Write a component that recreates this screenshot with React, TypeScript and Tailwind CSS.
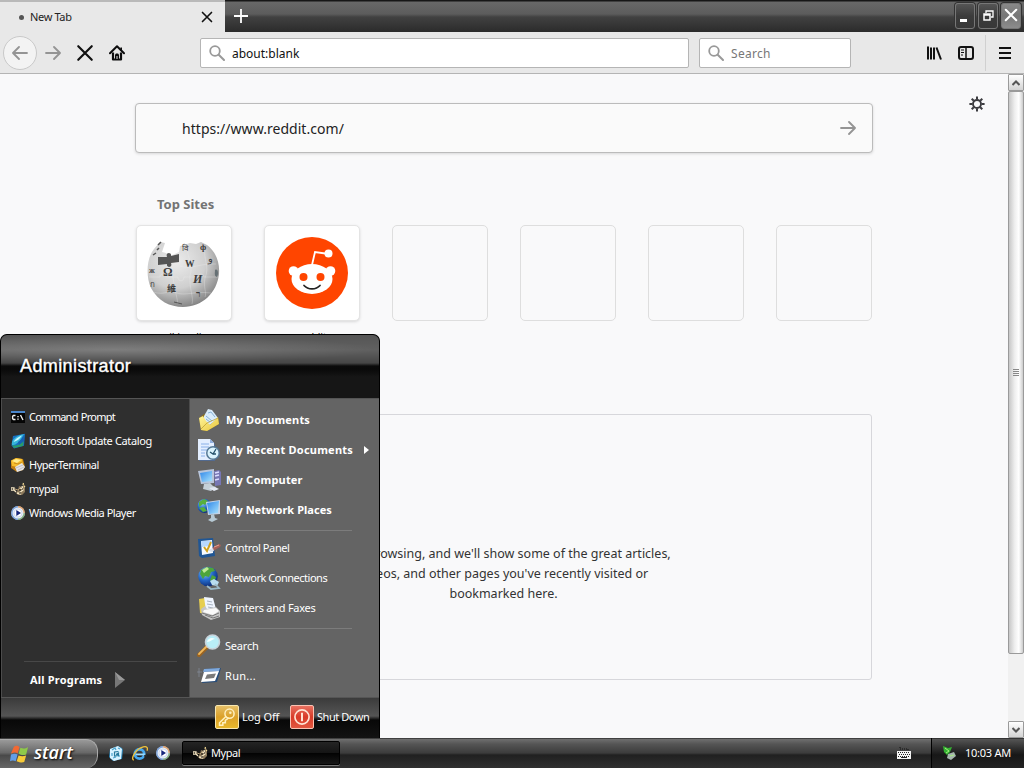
import type { ReactNode } from "react";

type IconProps = { children: ReactNode; box?: string; className?: string };

function Svg({ children, box = "0 0 24 24", className = "size-6" }: IconProps) {
  return (
    <svg viewBox={box} className={`block shrink-0 ${className}`} fill="none">
      {children}
    </svg>
  );
}

function Gradients() {
  return (
    <svg className="absolute size-0" aria-hidden="true">
      <defs>
        <radialGradient id="globe" cx=".4" cy=".3" r=".75">
          <stop offset="0" stopColor="#ececec" />
          <stop offset=".55" stopColor="#cfcfcf" />
          <stop offset="1" stopColor="#7c7c7c" />
        </radialGradient>
        <radialGradient id="earth" cx=".35" cy=".3" r=".8">
          <stop offset="0" stopColor="#8fd0f5" />
          <stop offset=".5" stopColor="#2468c8" />
          <stop offset="1" stopColor="#0a2268" />
        </radialGradient>
        <linearGradient id="screen" x1="0" y1="0" x2="1" y2="1">
          <stop offset="0" stopColor="#2f86e8" />
          <stop offset="1" stopColor="#a8e4ff" />
        </linearGradient>
        <linearGradient id="folder" x1="0" y1="0" x2="1" y2="1">
          <stop offset="0" stopColor="#fff59a" />
          <stop offset="1" stopColor="#e9c63c" />
        </linearGradient>
      </defs>
    </svg>
  );
}

/* ---------- Browser icons ---------- */

const Magnifier = () => (
  <Svg box="0 0 16 16" className="size-4">
    <circle cx="6" cy="6" r="4.8" stroke="#999" strokeWidth="1.8" />
    <path d="M9.7 9.7 15 15" stroke="#999" strokeWidth="2" strokeLinecap="round" />
  </Svg>
);

const Arrow = ({ left = false, className = "size-4" }: { left?: boolean; className?: string }) => (
  <Svg box="0 0 16 16" className={`${className} ${left ? "-scale-x-100" : ""}`}>
    <path d="M1 8h13.5M9 2l6 6-6 6" stroke="#949494" strokeWidth="1.8" strokeLinecap="round" strokeLinejoin="round" />
  </Svg>
);

const Cross = ({ className, stroke = "#111", width = 2 }: { className: string; stroke?: string; width?: number }) => (
  <Svg box="0 0 16 16" className={className}>
    <path d="m2 2 12 12M14 2 2 14" stroke={stroke} strokeWidth={width} strokeLinecap="round" />
  </Svg>
);

const Home = () => (
  <Svg box="0 0 16 16" className="size-4">
    <path d="M1 8.2 8 1.3l7 6.9" stroke="#0c0c0d" strokeWidth="2" strokeLinecap="round" strokeLinejoin="round" />
    <path d="M4 7.5v7h8v-7" stroke="#0c0c0d" strokeWidth="2.2" strokeLinejoin="round" />
    <path d="M6 15V9.5l1-1h2l1 1V15z" fill="#0c0c0d" />
    <path d="M8 11v3" stroke="#e5e5e5" strokeWidth="1" />
    <path d="M12.2 2.500v3" stroke="#0c0c0d" strokeWidth="1.600" />
  </Svg>
);

const Gear = () => (
  <Svg box="0 0 16 16" className="size-4">
    <circle cx="8" cy="8" r="4" stroke="#3c3c40" strokeWidth="1.9" />
    <path
      d="M8 .4v3M8 12.6v3M.4 8h3M12.6 8h3M2.7 2.7l2.1 2.1M11.2 11.2l2.1 2.1M13.3 2.7l-2.1 2.1M4.8 11.2l-2.1 2.1"
      stroke="#3c3c40"
      strokeWidth="2"
    />
  </Svg>
);

/* ---------- Top site icons ---------- */

const Wikipedia = () => (
  <Svg box="0 0 76 76" className="size-[76px]">
    <path
      d="M14 7 8 14C0 24 0 42 5 53c7 13 19 19 32 19 19 0 34-14 36-33 1-13-4-23-12-29l-6-3-5 2-6-1-6 2-4 1-1 6-9 4-4-3-4-1 3-9z"
      fill="url(#globe)"
    />
    <path d="M12 22h9c-2-5 5-5 4-1l8-2v8l-8 1c2 5-5 5-4 1l-9 1z" fill="#555" />
    <g stroke="#f2f2f2" strokeOpacity=".4" strokeWidth=".7">
      <path d="M3 42h11c0-4 6-4 6 0h12c0 5 6 5 6 0h14c0-4 6-4 6 0h15M7 57c12 4 16-3 24 1 8 3 18-2 34 0M34 31c11 4 20-3 36-2" />
      <path d="M27 30c-2 10 2 22 5 39M42 9c-3 11 6 19 2 32-1 12 4 22 2 28M59 13c-2 12 5 18 0 30-2 9 2 15 0 19" />
    </g>
    <g fill="#3d3d3d" className="font-['Liberation_Serif',serif]">
      <text x="17" y="41" fontSize="12" fontWeight="700">Ω</text>
      <text x="39" y="32" fontSize="9.5" fontWeight="700">W</text>
      <text x="47" y="48" fontSize="12" fontWeight="700" fontStyle="italic">И</text>
      <text x="21" y="57" fontSize="9" fontWeight="700" className="font-['Noto_Sans_CJK_SC',sans-serif]">維</text>
      <text x="50" y="62" fontSize="9" fontWeight="700">ר</text>
      <text x="36" y="16" fontSize="8">वि</text>
      <text x="54" y="15" fontSize="9" fontWeight="700">ф</text>
      <text x="62" y="27" fontSize="10">و</text>
      <text x="3" y="38" fontSize="8" fontWeight="700">ж</text>
      <text x="4" y="52" fontSize="8">ก</text>
    </g>
    <path d="m12 10 3-3M7 20l3-2M11 15l2-2" stroke="#555" strokeWidth="1.5" />
    <path d="M69 35c3-2 4 4 2 7-3-1-2-4-2-7z" fill="#667074" />
    <path d="m28 67 8 2" stroke="#555" />
  </Svg>
);

const Reddit = () => (
  <Svg box="0 0 72 72" className="size-[72px]">
    <circle cx="36" cy="36" r="36" fill="#ff4500" />
    <path d="m36 28 3-13 14 2" stroke="#fff" strokeWidth="1.8" />
    <circle cx="52.5" cy="16.5" r="4" fill="#fff" />
    <circle cx="17.5" cy="34" r="4.8" fill="#fff" />
    <circle cx="54.5" cy="34" r="4.8" fill="#fff" />
    <ellipse cx="36" cy="42" rx="20.5" ry="15" fill="#fff" />
    <circle cx="27.5" cy="40" r="4" fill="#ff4500" />
    <circle cx="44.5" cy="40" r="4" fill="#ff4500" />
    <path d="M28 48.5c4 4.5 12 4.5 16 0" stroke="#222" strokeWidth="1.7" strokeLinecap="round" />
  </Svg>
);

/* ---------- Start menu icons ---------- */

const PromptIcon = () => (
  <Svg box="0 0 16 16" className="size-4">
    <path d="M1 2h14v12H1z" fill="#050505" />
    <path d="M1 2h14v2H1z" fill="#4a86cc" />
    <path d="M5.5 6.5h-2l-.9.9v2.2l.9.9h2M8 7v1.2M8 9.5v1.2M10.5 6l2.5 5" stroke="#eee" strokeWidth="1.4" />
  </Svg>
);

const CatalogIcon = () => (
  <Svg box="0 0 16 16" className="size-4">
    <path d="M3 3 15 .8l-1 12L4 15.500l-2.500-3z" fill="#1670c0" />
    <path d="M2 12C1 7 5 3 14.5 1 12 3 12 7 6 11c-1 .8-2 1-4 1z" fill="#35b6dc" />
    <path d="M3.5 9C5 6 8 4 12 2.5 10 6 7 8 3.5 9z" fill="#c5f6ff" />
    <path d="M2 12c4 1.5 7 0 11.5-4L13 13l-9 2z" fill="#2b9c68" />
    <path d="M8 9c2-1 4-3 5.5-6L14 8l-5 4z" fill="#1660b4" />
  </Svg>
);

const HyperIcon = () => (
  <Svg box="0 0 16 16" className="size-4">
    <path d="m1 4 5-3 7 1 2 8-2 3-6 2-6-4z" fill="#be7d13" />
    <path d="m1 3.5 5-2.5 6 1 1 5-5 3-6-1z" fill="#f7be2d" />
    <path d="m2 4 4-2 5 1-4 3z" fill="#ffed91" />
    <path d="m5 10 7-4 3 4-2 3-6 2z" fill="#e4e4e7" />
    <path d="m6 11 7-3M8 13l6-3" stroke="#b6b6c0" strokeWidth=".8" />
    <path d="m4 6 4 1 4-2" stroke="#c98c1d" />
  </Svg>
);

const MypalIcon = () => (
  <Svg box="0 0 16 16" className="size-4">
    <path d="m9 5 3 1 2-3 1 3v5l-3 3H8l-2-2 2-3z" fill="#8b785a" />
    <path d="M1 7h3v2H1M4 9l2 2M10 7l3 1M12 5l1 4-4 3M7 12l4 1" stroke="#f4e5c3" strokeWidth="1.3" />
    <path d="m13 4 .5-2M14 6l1-1" stroke="#f1d894" strokeWidth="1.2" />
    <path d="M2 8h1M9 9h2M12 8h1M9 12h2" stroke="#161310" strokeWidth="1.2" />
    <path d="m5 8 3 1 2-2" stroke="#b59b72" />
  </Svg>
);

const MediaIcon = () => (
  <Svg box="0 0 16 16" className="size-4">
    <circle cx="8" cy="8" r="6.8" fill="#e5edf8" />
    <path d="M8 1.8A6.2 6.2 0 0 1 14.2 8" stroke="#dfa36f" strokeWidth="1.4" />
    <path d="M14.2 8A6.2 6.2 0 0 1 8 14.2" stroke="#83ae83" strokeWidth="1.4" />
    <path d="M8 14.2A6.2 6.2 0 0 1 8 1.8" stroke="#7ca3dc" strokeWidth="1.4" />
    <circle cx="8" cy="8" r="4" fill="#fff" stroke="#c4d2ed" strokeWidth=".8" />
    <path d="m6.3 5 4.700 3-4.700 3z" fill="#17277c" />
  </Svg>
);

const DocumentsIcon = () => (
  <Svg>
    <path d="m2 10 5-4 14 3 1 7-12 7-6-1z" fill="#8d711d" />
    <path d="m7 8 4-7 4 1 6 8-8 7-6-2z" fill="#d9ecfb" />
    <path d="m11 5 3-1 4 5M9 8l6 5M9 11l4 3" stroke="#88b2d6" />
    <path d="m2 10 4-2 3 5 4 4 8-8 1 7-12 7-6-1z" fill="url(#folder)" />
    <path d="m4 21 6-6 11-5" stroke="#b99827" strokeWidth=".7" />
  </Svg>
);

const RecentIcon = () => (
  <Svg>
    <path d="M2 2h12l4 4v17H2z" fill="#526a90" />
    <path d="M1 1h12l4 4v17H1z" fill="#e3eeff" />
    <path d="M13 1v4h4z" fill="#8faede" />
    <path d="M4 6h8M4 9h8M4 12h6M4 15h4M4 18h4" stroke="#8ab0e8" />
    <circle cx="16" cy="15" r="7" fill="#557895" />
    <circle cx="16" cy="15" r="5.5" fill="#d9f2fc" />
    <path d="m13 14 3 2 3-5M16 16h3" stroke="#24516a" strokeWidth="1.3" />
  </Svg>
);

const ComputerIcon = () => (
  <Svg>
    <path d="m17 3 5-1 2 2v13l-6 1z" fill="#7777b4" />
    <path d="m18 5 4-1M18 8l4-1M18 12l4-1" stroke="#d9dcff" strokeWidth="1.5" />
    <path d="m1 3 16-2v14l-13 1z" fill="#b9c6dc" />
    <path d="m3 5 12-2v10l-10 1z" fill="url(#screen)" />
    <path d="m7 16 6-1 3 3 3 1-5 4-8-2z" fill="#c5d0d8" />
    <path d="m12 20 6-1 4 2-5 2z" fill="#e4e9f4" />
  </Svg>
);

const NetworkIcon = () => (
  <Svg>
    <circle cx="7.5" cy="8" r="7" fill="url(#earth)" />
    <path d="m2 4 5-3 4 2-3 4-2-1-4 3zM2 10l5-1 3 4-4 1z" fill="#58af3d" />
    <path d="m9 4 14-2v14l-12 1z" fill="#c5d3e6" />
    <path d="m10 5 12-2-1 12-9 1z" fill="url(#screen)" />
    <path d="m14 17 3-1 1 4 3 1-6 3-4-2 3-2z" fill="#b6c9d4" />
  </Svg>
);

const ControlIcon = () => (
  <Svg>
    <path d="m1 3 15-1 2 18-13 2-3-2z" fill="#205694" />
    <path d="m4 5 11-1 1 13-11 2z" fill="#f7fbff" />
    <path d="M4 5h11l-2 5-8 1z" fill="#b8d9ff" />
    <path d="m7 11 3 4 4-9" stroke="#d2a31d" strokeWidth="2" />
    <path d="m15 12 7-4 2 1-1 2-7 4z" fill="#a76159" />
    <path d="m11 14 5-2 1 3-3 1z" fill="#d8e0ee" />
    <path d="m17 11 5-2" stroke="#e7a18f" />
  </Svg>
);

const ConnectionsIcon = () => (
  <Svg>
    <circle cx="11" cy="10.5" r="9.8" fill="url(#earth)" />
    <path d="m4 4 6-3 6 1 2 3-4 1-2 5-4-1-2 3-3-5zM15 9l4 2-2 6-4-3z" fill="#4da53b" />
    <path d="m5 4 5-3 2 2-5 4z" fill="#c1e997" />
    <path d="m13 15 4-2 5 3-2 4-5-1z" fill="#b8dcf0" />
    <path d="m18 18 4 4-8 1-4-3" stroke="#9bb9c9" strokeWidth="1.7" />
  </Svg>
);

const PrinterIcon = () => (
  <Svg>
    <path d="m2 3 6-1 2 16-7-1z" fill="#e6ce50" />
    <path d="m7 1 9 1 3 11-10 2z" fill="#eff5ff" />
    <path d="m10 5 5 1M10 8l6 1M11 11l5 1" stroke="#a9b3c0" />
    <path d="m4 13 4-3 2 3 9-2 4 4v6l-9 3-9-5z" fill="#c5c5c5" />
    <path d="m7 14 12-2 3 3-6 4-10-3z" fill="#fafafa" />
    <path d="m5 17 10 3 7-3M8 19l8 3 6-2" stroke="#777" />
  </Svg>
);

const SearchIcon = () => (
  <Svg>
    <path d="m10 13-8 8" stroke="#9a6422" strokeWidth="4" strokeLinecap="round" />
    <path d="m10 12-8 8" stroke="#efb85c" strokeWidth="1.8" strokeLinecap="round" />
    <circle cx="15.5" cy="8" r="7" fill="#b9eef8" stroke="#c9d3db" strokeWidth="1.6" />
    <path d="M10 8c1-4 5-5 8-3-3 0-4 3-8 3z" fill="#f2ffff" />
  </Svg>
);

const RunIcon = () => (
  <Svg>
    <path d="m8 5 16-1-4 14-15 1z" fill="#294d78" />
    <path d="m7 5 16-1-1 3-16 1z" fill="#7fa9dc" />
    <path d="m7 8 15-1-4 10-14 1z" fill="#fff" />
    <path d="m10 10.500 9-1-2 4.500-9 1z" fill="#7a7a7a" />
    <path d="M2 4v9M0 8h5" stroke="#8c96a4" strokeWidth=".6" />
  </Svg>
);

const WindowsLogo = () => (
  <Svg box="0 0 20 20" className="size-[19px]">
    <path d="M4 2c3-2 4-1 6 0L8 9C6 7 4 8 1 9z" fill="#f26932" />
    <path d="M11 3c3 1 5 1 8-1l-2 8c-3 1-5 1-8-1z" fill="#8fc94a" />
    <path d="M1 10c3-1 5-1 7 0l-2 7c-2-1-4-1-6 0z" fill="#629ee6" />
    <path d="M9 11c3 1 5 1 8 0l-2 7c-3 1-5 0-8-1z" fill="#f8cb38" />
  </Svg>
);

const DesktopIcon = () => (
  <Svg box="0 0 16 16" className="size-4">
    <path d="m2 4 8-3 4 2 1 2-1 9-9 2-4-4z" fill="#2e86b8" />
    <path d="m2 4 8-3 4 3-1 10-7 2-4-3z" fill="#d9f3ff" />
    <path d="m4 5 3-2 1 2M10 3l2 1M4 8v3M11 10v2M5 13l3-1" stroke="#4ca5cf" strokeWidth="1.2" />
    <path d="M10.5 6.5 6.5 7v4l4-.5V8L8 9.500" stroke="#26799c" strokeWidth="1.2" />
  </Svg>
);

const ExplorerIcon = () => (
  <Svg box="0 0 18 18" className="size-[17px]">
    <circle cx="9" cy="9.5" r="5" stroke="#45a8ee" strokeWidth="3" />
    <path d="M5 10h10" stroke="#9bdcff" strokeWidth="2" />
    <path d="M14 11.5h3" stroke="#292929" strokeWidth="2" />
    <path d="M3 16C-1 15 5 4 13 2c4-1 5 1 4 4" stroke="#f2c33a" strokeWidth="1.4" />
  </Svg>
);

/* ---------- Start menu ---------- */

const programs: [string, ReactNode, string][] = [
  ["Command Prompt", <PromptIcon />, "tracking-[-0.75px] [word-spacing:1px]"],
  ["Microsoft Update Catalog", <CatalogIcon />, "tracking-[-0.38px]"],
  ["HyperTerminal", <HyperIcon />, "tracking-[-0.5px]"],
  ["mypal", <MypalIcon />, "tracking-[-0.45px]"],
  ["Windows Media Player", <MediaIcon />, "tracking-[-0.5px]"],
];

type PlaceProps = { icon: ReactNode; label: string; bold?: boolean; arrow?: boolean; tracking?: string };

function Place({ icon, label, bold, arrow, tracking = "" }: PlaceProps) {
  return (
    <div className="flex h-[30px] items-center pl-[7px]">
      {icon}
      <span className={`text-[11px] ${bold ? "ml-[5px] font-bold" : "ml-1"} ${tracking}`}>{label}</span>
      {arrow && <span className="mr-2.5 ml-auto border-y-4 border-l-[5px] border-y-transparent border-l-white" />}
    </div>
  );
}

const Divider = () => (
  <div className="h-2 pr-[27px] pl-[34px]">
    <div className="h-[6px] border-b border-[#7c7c7c]" />
  </div>
);

function StartMenu() {
  return (
    <div className="absolute top-[334px] left-0 flex h-[404px] w-[380px] flex-col overflow-hidden rounded-t-[7px] border border-b-0 border-black bg-black text-white">
      <header className="relative flex h-[63px] shrink-0 items-center bg-[linear-gradient(#555_0,#606060_15px,#464646_28px,#0b0b0b_31px,#090909_34px,#161616_42px,#161616_100%)] pl-[19px]">
        <div className="absolute inset-x-0 top-0 h-[29px] bg-[radial-gradient(ellipse_at_30%_50%,#ffffff30,transparent_70%)]" />
        <h2 className="relative -mt-0.5 font-['Liberation_Sans',sans-serif] text-[18px] leading-none tracking-[0.4px] [-webkit-text-stroke:0.4px_white] [text-shadow:1px_1px_2px_#000]">Administrator</h2>
      </header>
      <div className="flex h-[300px] shrink-0 border-y border-[#555]">
        <div className="flex w-[189px] flex-col border-r border-l border-[#4c4c4c] bg-[#2f2f2f] pt-[6px]">
          {programs.map(([label, icon, tracking]) => (
            <div key={label} className="flex h-6 items-center pl-[8px]">
              {icon}
              <span className={`ml-[3px] text-[11px] ${tracking}`}>{label}</span>
            </div>
          ))}
          <div className="mt-auto mr-3 ml-[22px] border-t border-[#484848]" />
          <div className="flex h-[35px] items-center pl-[28px] text-[11px] font-bold tracking-[0.2px]">
            <span className="mt-px">All Programs</span>
            <Svg box="0 0 10 16" className="ml-[13px] h-4 w-2.5">
              <path d="M0 0 10 8 0 16z" fill="#777" />
              <path d="M0 0 10 8H4z" fill="#999" />
            </Svg>
          </div>
        </div>
        <div className="flex flex-1 flex-col bg-[#646464] pt-[6px]">
          <Place bold tracking="tracking-[0.17px]" icon={<DocumentsIcon />} label="My Documents" />
          <Place bold tracking="tracking-[0.22px]" arrow icon={<RecentIcon />} label="My Recent Documents" />
          <Place bold tracking="tracking-[0.2px]" icon={<ComputerIcon />} label="My Computer" />
          <Place bold tracking="tracking-[0.04px]" icon={<NetworkIcon />} label="My Network Places" />
          <Divider />
          <Place tracking="tracking-[-0.4px]" icon={<ControlIcon />} label="Control Panel" />
          <Place tracking="tracking-[-0.48px]" icon={<ConnectionsIcon />} label="Network Connections" />
          <Place tracking="tracking-[-0.26px]" icon={<PrinterIcon />} label="Printers and Faxes" />
          <Divider />
          <Place tracking="tracking-[-0.2px]" icon={<SearchIcon />} label="Search" />
          <Place tracking="tracking-[0.3px]" icon={<RunIcon />} label="Run..." />
        </div>
      </div>
      <footer className="flex flex-1 items-center bg-[linear-gradient(#3b3b3b,#555_18px,#080808_22px,#131313)] pb-0.5 pl-[214px] text-[11px]">
        <span className="flex size-6 items-center justify-center rounded-[2px] border border-[#f8e7b0] bg-[linear-gradient(#e6c068,#dba028_50%,#e8b82c)]">
          <Svg className="size-5">
            <circle cx="15" cy="8" r="5.5" stroke="#fff0be" strokeWidth="1.8" />
            <circle cx="16" cy="7" r="1.5" fill="#fff0be" />
            <path d="m11 11-8 8v3h4v-3h3v-3l4-3" stroke="#fff0be" strokeWidth="1.8" />
          </Svg>
        </span>
        <span className="ml-[3px] w-[48px] tracking-[-0.15px] whitespace-nowrap">Log Off</span>
        <span className="flex size-6 items-center justify-center rounded-[2px] border border-[#f9c2b2] bg-[linear-gradient(#e77060,#d83b28_50%,#e25740)]">
          <Svg className="size-5">
            <circle cx="12" cy="12" r="8.5" stroke="#ffe4d4" strokeWidth="2" />
            <path d="M12 7v10" stroke="#ffe4d4" strokeWidth="2.4" />
          </Svg>
        </span>
        <span className="ml-[3px] tracking-[-0.45px] whitespace-nowrap">Shut Down</span>
      </footer>
    </div>
  );
}

/* ---------- Browser ---------- */

const captionButton = "flex h-[26px] w-5 items-center justify-center rounded-[3px] border border-[#777] shadow-[0_0_0_1px_#333]";
const darkCaption = "bg-[linear-gradient(#555,#3b3b3b_50%,#383838)]";

function TitleBar() {
  return (
    <div className="flex h-8 shrink-0 bg-[linear-gradient(#161616_0,#161616_1px,#686868_2px,#5c5c5c_14px,#414141_17px,#2b2b2b_100%)]">
      <div className="flex w-[225px] items-center border-t-2 border-[#b9b9b9] bg-[#e8e8e8] pl-[19px] text-[11px] text-[#222]">
        <span className="size-[5px] rounded-full bg-[#555]" />
        <span className="ml-1.5 tracking-[-0.35px]">New Tab</span>
        <Cross className="mr-3 ml-auto size-3" width={2.2} />
      </div>
      <Svg box="0 0 14 14" className="mt-[9px] ml-[9px] size-3.5">
        <path d="M7 0v14M0 7h14" stroke="#fff" strokeWidth="1.8" />
      </Svg>
      <div className="ml-auto flex gap-[3px] pt-[3px] pr-[3px]">
        <span className={`${captionButton} ${darkCaption}`}>
          <span className="mt-2 mr-1 h-[3px] w-[7px] bg-white" />
        </span>
        <span className={`${captionButton} ${darkCaption}`}>
          <Svg box="0 0 11 11" className="-mt-0.5 size-[11px]">
            <path d="M3 3V1h7v6H8" stroke="#fff" strokeWidth="1.3" />
            <path d="M1 4h6v6H1zM1 5h6" stroke="#fff" strokeWidth="1.5" />
          </Svg>
        </span>
        <span className={`${captionButton} bg-[linear-gradient(#888,#777_50%,#8c8c8c)]`}>
          <Cross className="-mt-0.5 size-3.5" stroke="#fff" width={2.4} />
        </span>
      </div>
    </div>
  );
}

function Toolbar() {
  return (
    <div className="flex h-[42px] shrink-0 items-center border-b border-[#b4b4b4] bg-[#e8e8e8] text-[12px]">
      <span className="ml-[3px] flex size-[34px] items-center justify-center rounded-full border border-[#c9c9c9] bg-[#f3f3f3]">
        <Arrow left />
      </span>
      <Arrow className="ml-[8px] size-4" />
      <Cross className="ml-[15px] size-[18px]" width={1.9} />
      <span className="ml-[15px]">
        <Home />
      </span>
      <div className="ml-[75px] flex h-[30px] w-[489px] items-center rounded-[2px] border border-[#b5b5b5] bg-white pl-2">
        <Magnifier />
        <span className="mt-0.5 ml-[7px] text-[#111]">about:blank</span>
      </div>
      <div className="ml-2.5 flex h-[30px] w-[152px] items-center rounded-[2px] border border-[#b5b5b5] bg-white pl-2">
        <Magnifier />
        <span className="mt-0.5 ml-[7px] tracking-[0.3px] text-[#777]">Search</span>
      </div>
      <Svg box="0 0 16 16" className="ml-[75px] size-4">
        <path d="M2 1.500v13M5 2.500v12M8 2.500v12" stroke="#111" strokeWidth="2" />
        <path d="m10.5 2.500 4.500 12" stroke="#111" strokeWidth="2" />
      </Svg>
      <Svg box="0 0 16 16" className="ml-4 size-4">
        <rect x="1" y="2" width="14" height="12" rx="2" stroke="#111" strokeWidth="2" />
        <path d="M8 2v12" stroke="#111" strokeWidth="1.5" />
        <path d="M3 5h3M3 7.5h3M3 10h2" stroke="#111" />
      </Svg>
      <span className="ml-[11px] h-9 border-l border-[#d0d0d0]" />
      <Svg box="0 0 12 12" className="ml-[13px] size-3">
        <path d="M0 1h12M0 6h12M0 11h12" stroke="#111" strokeWidth="2" />
      </Svg>
    </div>
  );
}

function ScrollButton({ down = false }: { down?: boolean }) {
  return (
    <span className="flex h-[17px] w-4 items-center justify-center rounded-[1px] border border-[#9a9a9a] bg-[linear-gradient(#fff,#d3d3d3)]">
      <Svg box="0 0 8 6" className={`h-1.5 w-2 ${down ? "rotate-180" : ""}`}>
        <path d="m.5 5 3.5-3.500L7.500 5" stroke="#555" strokeWidth="2" />
      </Svg>
    </span>
  );
}

const sites: [string, ReactNode][] = [
  ["wikipedia", <Wikipedia />],
  ["reddit", <Reddit />],
  ["", null],
  ["", null],
  ["", null],
  ["", null],
];

function NewTabPage() {
  return (
    <div className="flex min-h-0 flex-1 bg-[#f9f9fa]">
      <main className="flex flex-1 flex-col pl-[135px]">
        <div className="flex items-start">
          <div className="mt-[29px] flex h-[50px] w-[738px] items-center rounded-[4px] border border-[#bbb] bg-[#fafafa] pr-4 pl-[46px] text-[14px] text-[#222] shadow-[0_1px_3px_#0002]">
            <span className="tracking-[0.04px]">https://www.reddit.com/</span>
            <Arrow className="ml-auto size-4" />
          </div>
          <span className="mt-[22px] ml-24">
            <Gear />
          </span>
        </div>
        <h3 className="mt-[41px] ml-[22px] text-[13px] leading-5 font-bold text-[#737373]">Top Sites</h3>
        <div className="mt-[11px] flex gap-8 pl-px">
          {sites.map(([label, icon], index) => (
            <div key={index} className="w-24 text-center">
              <div className={`flex size-24 items-center justify-center rounded-[5px] border ${icon ? "border-[#e4e4e4] bg-white shadow-[0_1px_3px_#0002]" : "border-[#dedede]"}`}>
                {icon}
              </div>
              <span className="mt-[8px] block h-4 text-[11px] leading-4 tracking-[-0.3px] text-[#222]">{label}</span>
            </div>
          ))}
        </div>
        <section className="mt-[69px] flex h-[266px] w-[737px] justify-center rounded-[3px] border border-[#d7d7db] pt-[129px] text-center text-[12.5px] leading-5 text-[#333]">
          <p className="w-[350px]">
            Start browsing, and we'll show some of the great articles,
            <br />
            videos, and other pages you've recently visited or
            <br />
            bookmarked here.
          </p>
        </section>
      </main>
      <aside className="flex w-4 flex-col bg-[#f1f1f1]">
        <ScrollButton />
        <div className="flex h-[563px] flex-col items-center justify-center gap-px rounded-[2px] border border-[#9a9a9a] bg-[linear-gradient(90deg,#c7c7c7,#eee_40%,#fff_70%,#ccc)]">
          <span className="h-px w-1.5 bg-[#888]" />
          <span className="h-px w-1.5 bg-[#888]" />
          <span className="h-px w-1.5 bg-[#888]" />
          <span className="h-px w-1.5 bg-[#888]" />
        </div>
        <div className="mt-auto">
          <ScrollButton down />
        </div>
      </aside>
    </div>
  );
}

function Taskbar() {
  return (
    <div className="flex h-[30px] shrink-0 items-center bg-[linear-gradient(#111_0,#707070_1px,#555_6px,#3c3c3c_15px,#202020_17px,#303030)] text-[11px] text-white">
      <div className="flex h-[29px] w-[98px] items-center self-end rounded-r-[12px] border-t border-r border-[#aaa] bg-[linear-gradient(#999,#686868_45%,#494949_55%,#666)] pl-[10px]">
        <WindowsLogo />
        <span className="mb-1 ml-[5px] font-['Open_Sans',sans-serif] text-[18px] leading-none font-semibold tracking-[-0.1px] italic [text-shadow:1px_1px_2px_#000]">start</span>
      </div>
      <div className="ml-[10px] flex w-[74px] items-center gap-[7px]">
        <DesktopIcon />
        <ExplorerIcon />
        <MediaIcon />
      </div>
      <div className="flex h-6 w-[158px] items-center rounded-[2px] border border-black bg-[linear-gradient(#242424,#151515_48%,#030303_52%,#171717)] pl-[9px] shadow-[0_1px_0_#777]">
        <MypalIcon />
        <span className="mt-px ml-[3px] tracking-[-0.45px]">Mypal</span>
      </div>
      <Svg box="0 0 16 14" className="mr-[19px] ml-auto h-3.5 w-4">
        <path d="M4 1v2h8v2" stroke="#111" strokeDasharray="1 1" />
        <path d="M1 5h14v8H1z" fill="#f2f2f2" />
        <path d="M2 6.5h12M3 8.5h11M2 10.5h12" stroke="#222" strokeDasharray="1 1" />
        <path d="M5 11.5h6" stroke="#222" />
      </Svg>
      <div className="flex h-full w-[93px] items-center border-l border-black bg-[linear-gradient(#111_0,#555_1px,#303030_10px,#171717_17px,#222)] pl-[10px]">
        <Svg box="0 0 16 16" className="size-4">
          <path d="m6 9 6-2 2 4-5 4-4-2z" fill="#a6b6ae" />
          <path d="m1 1 5 2 4-1-2 5-3 3-3-3z" fill="#35b333" />
          <path d="m3 3 4 3-3 2M8 11l4-1" stroke="#a6ee7f" />
        </Svg>
        <span className="ml-[7px] tracking-[-0.25px] whitespace-nowrap">10:03 AM</span>
      </div>
    </div>
  );
}

export default function App() {
  return (
    <div className="relative flex h-screen w-full flex-col overflow-hidden bg-[#f9f9fa] font-['Noto_Sans',sans-serif]">
      <Gradients />
      <TitleBar />
      <Toolbar />
      <NewTabPage />
      <Taskbar />
      <StartMenu />
    </div>
  );
}
